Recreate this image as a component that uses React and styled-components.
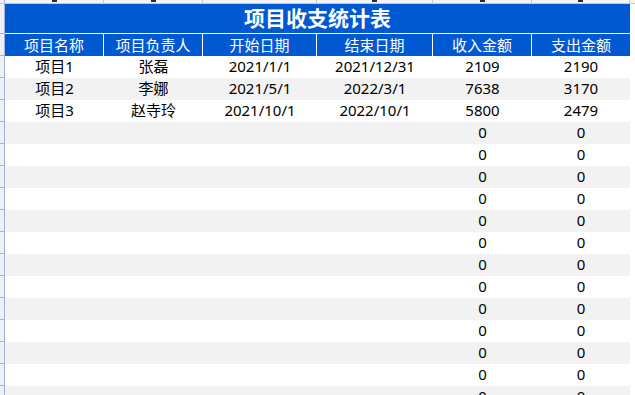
import styled, { createGlobalStyle } from "styled-components";

const GlobalStyle = createGlobalStyle`
  * {
    box-sizing: border-box;
  }
  body {
    margin: 0;
    background: #ffffff;
    font-family: "Noto Sans", "Noto Sans CJK SC", sans-serif;
  }
`;

const COLS = "99px 99px 114px 116px 99px 98px";

const rows = [
  ["项目1", "张磊", "2021/1/1", "2021/12/31", "2109", "2190"],
  ["项目2", "李娜", "2021/5/1", "2022/3/1", "7638", "3170"],
  ["项目3", "赵寺玲", "2021/10/1", "2022/10/1", "5800", "2479"],
];
for (let i = 0; i < 13; i++) rows.push(["", "", "", "", "0", "0"]);

const headers = ["项目名称", "项目负责人", "开始日期", "结束日期", "收入金额", "支出金额"];

export default function App() {
  return (
    <>
      <GlobalStyle />
      <Sheet>
        <ColumnStrip>
          <Corner />
          {headers.map((h, i) => (
            <ColumnHead key={h}>{i !== 2 && <Mark />}</ColumnHead>
          ))}
          <ColumnHead />
        </ColumnStrip>
        <Body>
          <RowStrip>
            <RowHead $h={30} />
            <RowHead $h={22} />
            {rows.map((_, i) => (
              <RowHead key={i} $h={22} />
            ))}
          </RowStrip>
          <Table>
            <Title>项目收支统计表</Title>
            <HeaderRow>
              {headers.map((h) => (
                <HeaderCell key={h}>{h}</HeaderCell>
              ))}
            </HeaderRow>
            {rows.map((r, i) => (
              <DataRow key={i} $alt={i % 2 === 1}>
                {r.map((c, j) => (
                  <Cell key={j}>{c}</Cell>
                ))}
              </DataRow>
            ))}
          </Table>
        </Body>
      </Sheet>
    </>
  );
}

const Sheet = styled.div`
  width: 635px;
  height: 395px;
  overflow: hidden;
  display: flex;
  flex-direction: column;
`;

const ColumnStrip = styled.div`
  display: grid;
  grid-template-columns: 5px ${COLS} 1fr;
  height: 4px;
  flex-shrink: 0;
  background: #f4f4f4;
  border-bottom: 1px solid #c8c8c8;
`;

const Corner = styled.div`
  border-right: 1px solid #a9b0d4;
  background: #eef0f6;
`;

const ColumnHead = styled.div`
  border-right: 1px solid #c8c8c8;
  display: flex;
  justify-content: center;
  &:last-child {
    border-right: none;
  }
`;

const Mark = styled.span`
  width: 5px;
  height: 2px;
  background: #2a2a2a;
`;

const Body = styled.div`
  display: flex;
`;

const RowStrip = styled.div`
  width: 5px;
  flex-shrink: 0;
  background: #eef0f6;
  border-right: 1px solid #a9b0d4;
`;

const RowHead = styled.div`
  height: ${(p) => p.$h}px;
  border-bottom: 1px solid #a9b0d4;
`;

const Table = styled.div`
  width: 625px;
  display: flex;
  flex-direction: column;
`;

const Title = styled.div`
  height: 30px;
  background: #0059d1;
  border-bottom: 1px solid #ffffff;
  color: #ffffff;
  font-size: 21px;
  font-weight: bold;
  line-height: 29px;
  text-align: center;
`;

const HeaderRow = styled.div`
  display: grid;
  grid-template-columns: ${COLS};
  height: 22px;
  background: #0059d1;
`;

const HeaderCell = styled.div`
  color: #ffffff;
  font-size: 15px;
  line-height: 22px;
  text-align: center;
  border-right: 1px solid #ffffff;
  white-space: nowrap;
  &:last-child {
    border-right: none;
  }
`;

const DataRow = styled.div`
  display: grid;
  grid-template-columns: ${COLS};
  height: 22px;
  background: ${(p) => (p.$alt ? "#f2f2f2" : "#ffffff")};
`;

const Cell = styled.div`
  color: #000000;
  font-size: 15px;
  line-height: 21px;
  text-align: center;
  white-space: nowrap;
`;
